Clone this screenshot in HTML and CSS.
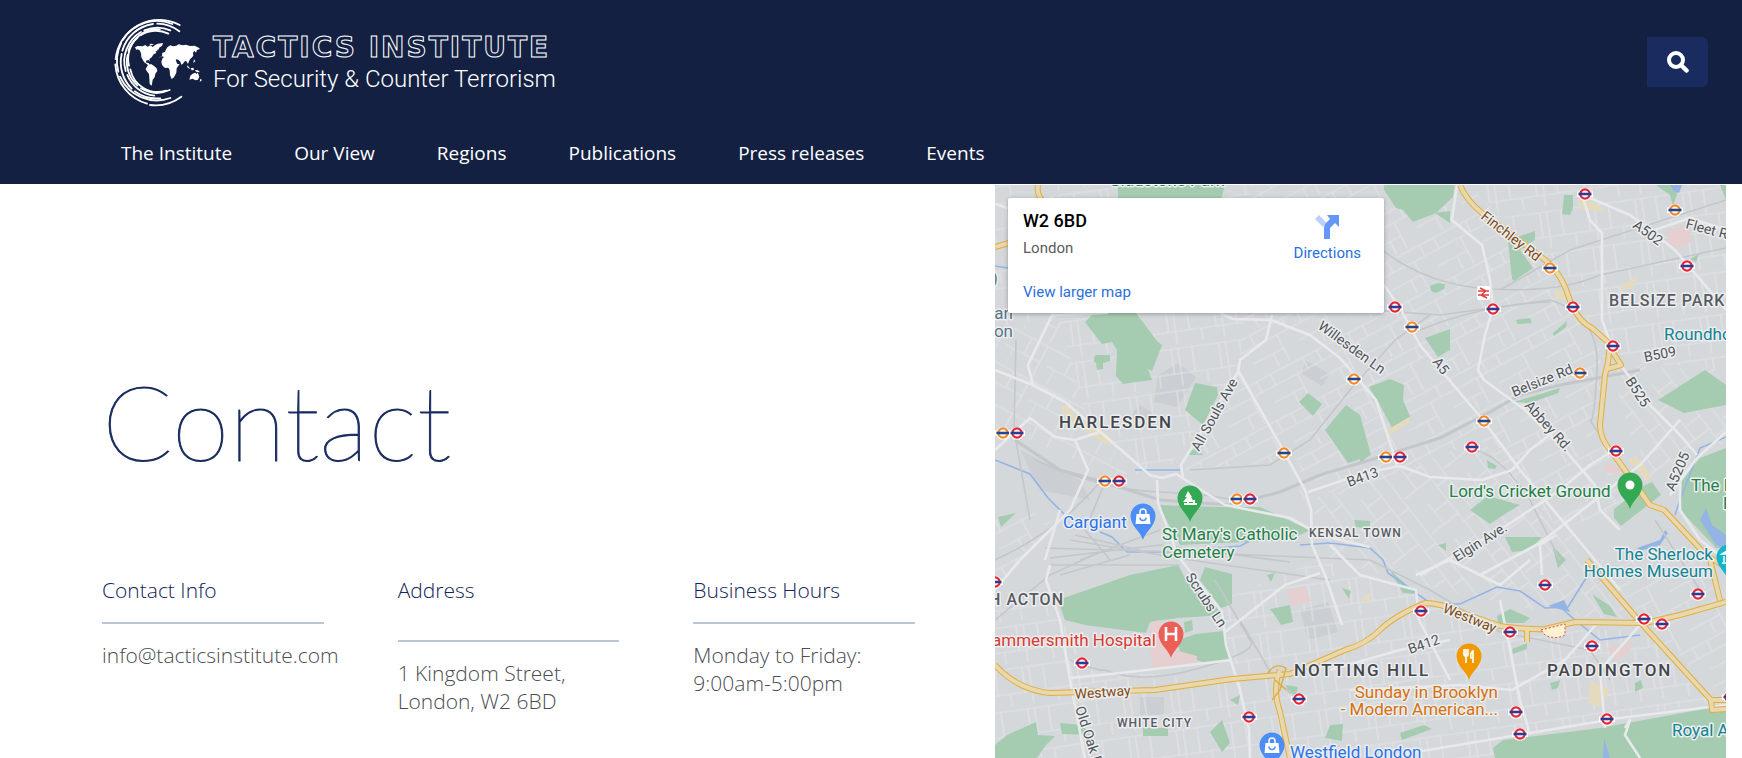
FILE: index.html
```html
<!DOCTYPE html>
<html lang="en">
<head>
<meta charset="utf-8">
<meta name="viewport" content="width=device-width, initial-scale=1">
<title>Contact - Tactics Institute</title>
<link rel="stylesheet" href="styles.css">
</head>
<body>
<header class="site-header">
  <div class="masthead">
    <a class="logo" href="#">
      <svg class="logo-mark" viewBox="66 48 280 276" aria-hidden="true">
        <g fill="none" stroke="#fff" stroke-width="5.5" stroke-linecap="round">
          <path d="M268 78A131 131 0 0 0 76 180"/>
          <path d="M75 196A131 131 0 0 0 170 314"/>
          <path d="M179 318A131 131 0 0 0 273 293"/>
          <path d="M246 75A121 121 0 0 0 98 122M92 133A121 121 0 0 0 84 218M89 233A121 121 0 0 0 240 297"/>
          <path d="M267 97A112 112 0 0 0 201 74M188 75A112 112 0 0 0 96 155M94 165A112 112 0 0 0 124 269M133 277A112 112 0 0 0 210 298"/>
          <path d="M240 94A102 102 0 0 0 162 94M152 99A102 102 0 0 0 106 216M111 228A102 102 0 0 0 192 290"/>
          <path d="M208 91A93 93 0 0 0 114 155M112 168A93 93 0 0 0 141 259M152 268A93 93 0 0 0 238 273"/>
          <path d="M234 104A84 84 0 0 0 151 109M142 116A84 84 0 0 0 116 200M120 211A84 84 0 0 0 227 275"/>
        </g>
        <g fill="#fff">
          <path d="M133 146l8-5 16 1 8-4 7 5 8-4 7 5 7-5 6 7 1 11-5-1 2 6-8 4-6 9-7 5 2 8-4-5-8 2 1 6 7 1 3 6 5 3-5 1-9-7-8-6-8-14-1-12-4-9-7-3-5 3 2-4z"/>
          <path d="M193 139l9-5 16-2-3 9-7 4-5 9-6-7zM176 136l8-2 7 3-8 2z"/>
          <path d="M173 198l9-3 9 6 8 7 2 8-6 8-2 11-6 7-2 14-2 4-5-5-1-18-1-12-7-9-3-6z"/>
          <path d="M217 177l9-6 14 1 5 4 10 2 3 10 3 7 7 0-9 13-1 13-7 14-7 5-5-12-1-15-4-7-10 1-9-9-2-10z"/>
          <path d="M215 170l1-9 8-2 2-6 5-8 9-6 8 3 10-2 7-4 12 3 10-2 12 4 14-1 12 6 4 4-9 3-3 8-5-6-4 7 1 8-5 6-4 3-4 8-3 8-5-8-4-1-7 9-4 2-3-9-6-6-8-1-5 12-9 6-8-18-6-2-3-3-9-4-7 1-3 4z"/>
          <path d="M244 222l6-3-2 12-5 3zM290 199l6 5 3 7-8-6zM301 208l8-2 2 7-7 1zM314 213l9 1 6 6-12-2zM300 230l7-6 8-3 4 4 3-5 5 13-4 9-8 2-8-5-10 3zM330 239l5 4-7 6zM311 181l4 5-6 7z"/>
        </g>
      </svg>
      <span class="logo-text">
        <span class="logo-name">TACTICS INSTITUTE</span>
        <span class="logo-tag">For Security &amp; Counter Terrorism</span>
      </span>
    </a>
    <button class="search" type="button" aria-label="Search">
      <svg viewBox="0 0 22 22" aria-hidden="true"><circle cx="9" cy="9" r="7" fill="none" stroke="#fff" stroke-width="4"/><path d="M14 14l5.500 5.500" stroke="#fff" stroke-width="4.500" stroke-linecap="round"/></svg>
    </button>
  </div>
  <nav class="menu">
    <a href="#">The Institute</a>
    <a href="#">Our View</a>
    <a href="#">Regions</a>
    <a href="#">Publications</a>
    <a href="#">Press releases</a>
    <a href="#">Events</a>
  </nav>
</header>
<main class="page">
  <section class="contact">
    <h1>Contact</h1>
    <div class="columns">
      <section class="col">
        <h2>Contact Info</h2>
        <hr>
        <p><a href="#">info@tacticsinstitute.com</a></p>
      </section>
      <section class="col col-address">
        <h2>Address</h2>
        <hr>
        <p>1 Kingdom Street,<br>London, W2 6BD</p>
      </section>
      <section class="col">
        <h2>Business Hours</h2>
        <hr>
        <p>Monday to Friday:<br>9:00am-5:00pm</p>
      </section>
    </div>
  </section>
  <section class="map" aria-label="Map">
    <svg class="map-canvas" viewBox="995 185 731 573" preserveAspectRatio="xMinYMin slice">
      <defs>
        <pattern id="s1" width="46" height="38" patternUnits="userSpaceOnUse" patternTransform="rotate(28)"><path d="M0 4H46M0 22H30M12 4V22M30 4V38M0 38V22M38 22H46" class="minor"/></pattern>
        <pattern id="s2" width="52" height="44" patternUnits="userSpaceOnUse" patternTransform="rotate(-28)"><path d="M0 3H52M0 15H52M0 30H34M10 3V15M34 15V44M22 30V44M46 3V15" class="minor"/></pattern>
        <pattern id="s3" width="48" height="42" patternUnits="userSpaceOnUse" patternTransform="rotate(-8)"><path d="M0 5H48M14 5V42M28 5V30M0 30H48M40 30V42M7 30V5" class="minor"/></pattern>
        <pattern id="s4" width="44" height="50" patternUnits="userSpaceOnUse" patternTransform="rotate(52)"><path d="M0 3H44M0 17H44M0 35H26M10 17V35M26 17V50M36 3V17" class="minor"/></pattern>
        <g id="tube-red"><path d="M-7-1.500H-5.500A6 6 0 0 1 5.500-1.500H7V2H5.500A6 6 0 0 1-5.500 2H-7Z" fill="#fff" stroke="#fff" stroke-width="2"/><circle r="4.700" fill="#fff" stroke="#e32636" stroke-width="2.200"/><path d="M-6.500 0H6.500" stroke="#2a3c94" stroke-width="2.600"/></g>
        <g id="tube-orange"><path d="M-7-1.500H-5.500A6 6 0 0 1 5.500-1.500H7V2H5.500A6 6 0 0 1-5.500 2H-7Z" fill="#fff" stroke="#fff" stroke-width="2"/><circle r="4.700" fill="#fff" stroke="#f28a2c" stroke-width="2.200"/><path d="M-6.500 0H6.500" stroke="#1f4595" stroke-width="2.600"/></g>
        <path id="pin" d="M0 24C-2 16-12.500 10-12.500 0A12.500 12.500 0 0 1 12.500 0C12.500 10 2 16 0 24Z"/>
        <g id="bag"><path d="M-6.500-2H6.500L7.500 8H-7.500Z" fill="#fff"/><path d="M-3-1V-4A3 3 0 0 1 3-4V-1" fill="none" stroke="#fff" stroke-width="1.500"/><path d="M-3 1.500A3 3 0 0 0 3 1.500" fill="none" stroke="#4c8df6" stroke-width="1.500"/></g>
      </defs>
      <rect x="995" y="185" width="731" height="573" fill="#d5d8db"/>
      <g fill="#cbcfd4"><path d="M1158 375l20-12 18 14-18 30-24-5zM1305 360l25 14-8 12-20-12zM1140 405l16 10-16 14-12-12zM1020 450l60 30 10 20-50-10zM1300 610l28-8 10 30-30 8zM1140 697h24v18h-24z"/></g>
      <path fill="url(#s3)" d="M995 185H1250L1240 370 1160 480 1090 430 1060 320 995 330z"/>
      <path fill="url(#s1)" d="M995 330L1060 320 1090 430 1160 480 1100 470 995 425z"/>
      <path fill="url(#s2)" d="M1250 185H1470L1540 260 1600 345 1430 310 1360 400 1300 460 1180 470 1240 370z"/>
      <path fill="url(#s3)" d="M1470 185H1726V370L1605 360 1560 270z"/>
      <path fill="url(#s2)" d="M1430 310L1600 345V430L1640 500 1560 530 1480 440 1380 480 1300 500 1300 460z"/>
      <path fill="url(#s4)" d="M1310 500L1400 470 1480 440 1580 540 1640 620 1560 615 1440 590 1330 560zM1610 365L1726 370V440L1680 490 1650 500z"/>
      <path fill="url(#s3)" d="M995 600L1050 600 1090 670 1235 680 1220 600 1320 560 1440 600 1500 630 1640 630 1720 700 1500 740V758H995z"/>
      <path fill="url(#s2)" d="M1600 560L1710 560 1726 600V700L1640 620zM995 520L1060 510 1015 570 995 580z"/>

      <g class="park">
        <path d="M1118 185H1225L1221 200H1118zM1384 185H1455L1453 197 1436 213 1413 222 1403 210 1396 208 1384 190zM1435 213L1450 211V223zM1508 240L1535 231V240L1520 250 1533 268 1514 281 1512 279zM1564 195H1573V208L1570 215 1562 214zM1656 185H1680L1673 206 1670 195zM1720 185H1726V200zM1690 259L1699 254 1696 262z"/>
        <path d="M1085 322L1094 313H1136L1157 341 1162 345 1152 371 1148 369 1152 380 1136 382 1123 384 1116 376 1117 350 1112 342 1102 344zM1094 357l6-2v9l-6-2zM1095 355h15v6l-7 2v6l-6 1z"/>
        <path d="M1430 286l8-3 7 1-1 5-8 4-5-2zM1516 320l14-2 2 5-15 1zM1553 333l14-12-1 6-12 9zM1425 338L1450 329V350L1438 357zM1514 402L1560 388 1558 393 1530 403z"/>
        <path d="M1185 410L1195 383 1217 387 1218 395 1203 425zM1188 452l7-3 9 6h-14zM1299 402L1308 393 1322 404 1313 416zM1325 430L1346 405 1360 415 1371 455 1348 463zM1369 387L1390 379 1404 385 1403 400 1411 418 1392 428 1380 405zM1658 400L1705 370 1726 385V405L1684 413zM1360 430l10 25-10 8zM1487 460l10 6-2 3-7-1z"/>
        <path d="M1158 505L1220 507 1260 507 1310 530 1290 540 1180 545zM998 517L1016 513 1001 527zM1354 520l16 1v8l-14-2z"/>
        <path d="M1470 510L1488 496 1520 505 1508 512 1490 524zM1614 509L1645 485 1652 482 1661 495 1621 526 1614 518zM1680 510L1682 480 1700 458 1726 448V548L1716 548zM1505 537H1542L1530 550 1512 552zM1552 545l14 15-8 8zM1438 545l8-2v8z"/>
        <path d="M1058 600L1130 575 1178 565 1185 578 1225 615 1178 618 1150 622 1146 633 1085 625 1065 620zM1205 567L1232 574V604L1221 608 1200 580zM1184 622l8-2 1 10-8 3zM1178 640L1196 634 1224 631 1231 658 1206 663 1180 655zM1270 609L1290 605 1293 622 1281 625 1276 617zM1342 588l9 3-2 8zM1267 575l8-2-4 9z"/>
        <path d="M1007 735L1036 722 1038 735 1055 736 1046 745 1037 758H995V745zM1060 723L1083 725 1090 735 1062 734zM1143 728h25v8h-25zM1210 732L1222 720 1230 743 1222 752zM1286 685l12 2-2 8-8-2zM1330 725l13-1-1 17-17-3zM1230 700l10-5-2 10z"/>
        <path d="M1497 616L1510 609 1530 618 1524 623 1498 623zM1592 594L1610 606 1617 617 1604 614zM1493 748L1503 740 1600 728 1726 705V758H1495zM1390 570l20 18 5 6-12-1zM1512 649l15-6v6l-14 5zM1550 683l10-3-2 8-6 2zM1635 683l6-3 2 8-8 4zM1400 733l24-8 8 4-30 11z"/>
      </g>
      <g fill="#e5cfd0"><path d="M1151 622L1160 620V642L1182 652 1197 656V663L1153 669 1149 645zM1287 590L1305 586 1311 601 1293 607zM1667 229l22-4 3 16-14 8-10-5zM1605 462l18 8-5 5-14-5zM1607 648l25-5-3 9-13 9z"/></g>
      <g fill="#e4dbbf"><path d="M1060 405l10 2 10 20 25 5 10 10-10 2-24-16-10-2zM1555 290l16 2 2 9-18-2zM1577 200l18 2 10 9-22-1zM1620 286l18-10-6 12-10 3zM1387 430l24-14-2 7-20 12zM1628 460l8-4 16 20-5 5zM1360 600l12-8-4 12zM1590 680l20 10-10 18-12-6z"/></g>

      <g class="water-line"><path d="M995 460L1030 474 1048 498 1065 515M1100 532L1112 537 1127 552 1170 552 1200 550 1240 546 1262 535M1135 470H1180M1300 545L1330 543 1370 548 1383 560 1388 573 1430 603 1460 604 1497 587 1520 591 1545 608 1568 607 1588 575M1560 607L1575 620 1600 640 1640 635M1726 437L1700 448 1680 500 1675 515M1008 268L995 266"/></g>
      <g fill="#94b4e6"><path d="M1700 520L1706 508 1712 525 1726 535V549L1716 545zM1637 548L1660 540 1665 530 1668 533 1660 545 1640 551zM1604 738L1610 758H1603zM1670 185h12l-3 8-5-2zM1548 606l16-6 6 12z"/></g>

      <g class="rail">
        <path d="M1015 440L1060 470 1100 481 1160 500 1230 505 1280 492 1320 475 1380 457 1440 438 1490 412 1520 395 1560 385 1640 370" stroke-width="3"/>
        <path d="M1370 240Q1420 285 1490 289T1600 275L1726 248M1370 310L1440 315 1550 300Q1600 315 1597 370T1590 420L1625 475M1420 330Q1480 305 1550 302M1500 290L1570 250 1726 200"/>
        <path d="M1190 470L1270 465 1310 440 1350 390 1395 340 1430 315M1016 340L1014 430 1030 520M1035 460Q1100 490 1160 492T1250 505M1100 482Q1060 530 995 560"/>
        <path d="M1045 548L1180 552 1370 560 1430 590 1500 632 1590 650 1610 680M1050 558L1160 545 1290 562M1070 540L1190 560 1330 580M1080 560L1160 530M1075 535L1140 550M1050 565H1180M1060 575L1130 555M1106 480L1085 530 1110 560" />
        <path d="M1105 670Q1140 685 1200 668T1250 640L1215 580M1070 660Q1100 672 1105 670M1240 620L1275 680 1300 700M995 620L1050 575 1100 552"/>
        <path d="M1475 450Q1500 455 1530 500L1560 560M1655 520L1700 590"/>
      </g>

      <g class="road">
        <path d="M995 204L1020 212 1053 198M1053 313L1028 365 1033 385M995 370L1033 385 1065 402 1098 430 1150 475 1162 478 1176 474 1225 505 1290 518 1320 535 1370 547M995 450L1030 418 1055 437 1075 440 1088 470 1070 510 1020 560 995 590M1075 440L1100 432"/>
        <path d="M1220 313L1233 319 1271 320 1310 335 1340 358 1376 400 1393 452 1397 467M1272 315L1266 340 1240 360 1238 372 1181 465 1183 477M1238 370L1283 450 1305 490 1311 510 1312 545 1325 575 1342 625"/>
        <path d="M1157 480L1158 503 1178 556 1222 612 1226 645 1240 690 1249 730 1250 758M1050 565L1046 580 1060 620 1070 680 1085 758M1060 510L1045 560M1225 632L1285 585 1320 573M1070 678L1120 673 1232 660M1108 313L1053 315"/>
        <path d="M1384 285L1400 308 1420 345 1445 375 1483 420 1520 470 1570 530 1620 590M1457 185L1452 220 1482 245 1490 280 1493 308 1485 335 1478 370 1484 380 1525 410 1565 450 1595 485 1600 510 1620 530M1582 195L1590 220 1602 233V320L1617 360 1650 405 1680 435 1697 455"/>
        <path d="M1583 195L1630 215 1675 250 1726 310M1640 235L1690 218 1726 230M1308 492L1350 478 1380 470 1400 466 1430 477 1482 480 1512 470 1530 450 1556 430M1420 575L1500 530 1560 490 1590 465 1614 450M1480 575L1540 543 1640 465 1680 420M1697 458L1680 480V510L1700 540 1726 560M1726 432L1697 458 1670 495M1556 535L1540 545 1542 575"/>
        <path d="M1330 545L1360 575 1416 590 1419 620 1450 680M1416 575L1450 560 1500 585 1530 560M1330 670L1400 650 1450 640M1380 758L1500 738 1620 718 1726 705M1500 600L1508 640 1520 700 1530 735M1512 690L1460 685 1350 690M1600 620L1565 660 1512 690M1640 625L1600 670 1605 728M1625 728L1630 720 1625 735 1640 758"/>
      </g>
      <g class="hwy-edge"><path d="M995 665Q1018 690 1050 693L1155 690 1232 679 1290 674 1345 650Q1366 644 1380 630T1425 603Q1440 603 1460 612L1500 626Q1530 630 1545 629L1575 622 1645 623 1680 615 1726 602"/><path d="M1038 185Q1036 195 1045 204M995 247L1009 243M1460 185Q1466 200 1482 213L1540 256Q1560 270 1568 295T1592 328L1610 344 1608 362 1605 375 1600 425Q1600 440 1612 452L1650 505 1664 510 1706 555 1726 567M1610 348L1621 365 1607 369M1527 630V642M1280 670Q1272 688 1280 712L1290 758M1587 560L1640 622 1711 700 1726 700M1710 560L1720 600M1711 700L1712 710 1726 709"/></g>
      <g class="hwy"><path d="M995 665Q1018 690 1050 693L1155 690 1232 679 1290 674 1345 650Q1366 644 1380 630T1425 603Q1440 603 1460 612L1500 626Q1530 630 1545 629L1575 622 1645 623 1680 615 1726 602"/><path d="M1038 185Q1036 195 1045 204M995 247L1009 243M1460 185Q1466 200 1482 213L1540 256Q1560 270 1568 295T1592 328L1610 344 1608 362 1605 375 1600 425Q1600 440 1612 452L1650 505 1664 510 1706 555 1726 567M1610 348L1621 365 1607 369M1527 630V642M1280 670Q1272 688 1280 712L1290 758M1587 560L1640 622 1711 700 1726 700M1710 560L1720 600M1711 700L1712 710 1726 709"/></g>
      <path class="hwy-knot" d="M1268 673Q1275 662 1286 668L1280 690 1272 700M1275 680L1286 690"/>
      <path d="M1541 630L1565 624V635Q1555 640 1545 635Z" fill="#fdf3d0" stroke="#ea4335" stroke-dasharray="2 2"/>

      <g>
        <use href="#tube-red" x="1585" y="194"/><use href="#tube-red" x="1687" y="266"/><use href="#tube-red" x="1395" y="307"/><use href="#tube-red" x="1493" y="309"/><use href="#tube-red" x="1573" y="307"/><use href="#tube-red" x="1613" y="346"/>
        <use href="#tube-orange" x="1675" y="210"/><use href="#tube-orange" x="1550" y="268"/><use href="#tube-orange" x="1412" y="327"/><use href="#tube-orange" x="1580" y="373"/><use href="#tube-orange" x="1354" y="379"/>
        <use href="#tube-orange" x="1003" y="433"/><use href="#tube-red" x="1017" y="433"/><use href="#tube-orange" x="1105" y="481"/><use href="#tube-red" x="1119" y="481"/><use href="#tube-orange" x="1284" y="453"/><use href="#tube-orange" x="1237" y="499"/><use href="#tube-red" x="1250" y="499"/>
        <use href="#tube-orange" x="1484" y="421"/><use href="#tube-red" x="1472" y="447"/><use href="#tube-orange" x="1386" y="457"/><use href="#tube-red" x="1400" y="457"/><use href="#tube-red" x="1616" y="451"/>
        <use href="#tube-red" x="995" y="582"/><use href="#tube-red" x="1082" y="663"/><use href="#tube-red" x="1299" y="699"/><use href="#tube-red" x="1249" y="717"/>
        <use href="#tube-red" x="1545" y="585"/><use href="#tube-red" x="1698" y="594"/><use href="#tube-red" x="1421" y="611"/><use href="#tube-red" x="1510" y="632"/><use href="#tube-red" x="1644" y="619"/><use href="#tube-red" x="1662" y="624"/><use href="#tube-red" x="1592" y="646"/><use href="#tube-red" x="1516" y="712"/><use href="#tube-red" x="1520" y="734"/><use href="#tube-red" x="1607" y="719"/><use href="#tube-red" x="1730" y="697"/>
        <rect x="1477" y="286" width="13" height="14" rx="2" fill="#fff"/><path d="M1478 291H1489M1478 295H1489M1480 288L1486 291 1481 295 1487 298" fill="none" stroke="#e0403f" stroke-width="1.400"/>
      </g>

      <g class="labels">
        <text class="poi green" x="1109" y="186">Gladstone Park</text>
        <text class="area" x="1059" y="428">HARLESDEN</text>
        <text class="area mid" x="1609" y="306">BELSIZE PARK</text>
        <text class="area small" x="1309" y="537">KENSAL TOWN</text>
        <text class="area mid" x="1064" y="605" text-anchor="end">NORTH ACTON</text>
        <text class="area" x="1294" y="676">NOTTING HILL</text>
        <text class="area" x="1547" y="676">PADDINGTON</text>
        <text class="area small" x="1117" y="727">WHITE CITY</text>
        <text class="poi slate" x="1013" y="319" text-anchor="end">Indian</text>
        <text class="poi slate" x="1013" y="337" text-anchor="end">Station</text>
        <text class="poi slate" x="998" y="284" text-anchor="end">)</text>
        <text class="poi teal" x="1664" y="340">Roundhouse</text>
        <text class="poi green" x="1449" y="497">Lord's Cricket Ground</text>
        <text class="poi green" x="1691" y="491">The Regent's</text>
        <text class="poi green" x="1723" y="509">Park</text>
        <text class="poi green" x="1162" y="540">St Mary's Catholic</text>
        <text class="poi green" x="1162" y="558">Cemetery</text>
        <text class="poi blue" x="1063" y="528">Cargiant</text>
        <text class="poi teal" x="1713" y="560" text-anchor="end">The Sherlock</text>
        <text class="poi teal" x="1713" y="577" text-anchor="end">Holmes Museum</text>
        <text class="poi red" x="1156" y="646" text-anchor="end">Hammersmith Hospital</text>
        <text class="poi orange" x="1498" y="698" text-anchor="end">Sunday in Brooklyn</text>
        <text class="poi orange" x="1498" y="715" text-anchor="end">- Modern American...</text>
        <text class="poi blue" x="1290" y="758">Westfield London</text>
        <text class="poi teal" x="1672" y="736">Royal Albert Hall</text>
        <text class="street brown" transform="translate(1480 218) rotate(38)">Finchley Rd</text>
        <text class="street brown" transform="translate(1075 699) rotate(-4)">Westway</text>
        <text class="street brown" transform="translate(1442 612) rotate(22)">Westway</text>
        <text class="street" transform="translate(1317 328) rotate(36)">Willesden Ln</text>
        <text class="street" transform="translate(1632 227) rotate(36)">A502</text>
        <text class="street" transform="translate(1685 228) rotate(15)">Fleet Rd</text>
        <text class="street" transform="translate(1432 362) rotate(52)">A5</text>
        <text class="street" transform="translate(1645 362) rotate(-11)">B509</text>
        <text class="street" transform="translate(1514 397) rotate(-22)">Belsize Rd</text>
        <text class="street" transform="translate(1625 381) rotate(57)">B525</text>
        <text class="street" transform="translate(1524 406) rotate(48)">Abbey Rd.</text>
        <text class="street" transform="translate(1199 452) rotate(-61)">All Souls Ave</text>
        <text class="street" transform="translate(1349 487) rotate(-20)">B413</text>
        <text class="street" transform="translate(1674 492) rotate(-67)">A5205</text>
        <text class="street" transform="translate(1457 562) rotate(-32)">Elgin Ave.</text>
        <text class="street" transform="translate(1185 577) rotate(56)">Scrubs Ln</text>
        <text class="street" transform="translate(1410 654) rotate(-19)">B412</text>
        <text class="street" transform="translate(1075 708) rotate(72)">Old Oak Rd</text>
      </g>

      <g transform="translate(1190 498)"><use href="#pin" fill="#34a853"/><path d="M-2-7L2-1H1L4 4H-1V5H3V2H5V5H7V7H-6V5H-3V4H-7L-3-1H-5Z" fill="#fff"/></g>
      <g transform="translate(1143 516)"><use href="#pin" fill="#4c8df6"/><use href="#bag"/></g>
      <g transform="translate(1630 485)"><use href="#pin" fill="#34a853"/><circle r="4.500" fill="#fff"/></g>
      <g transform="translate(1171 634)"><use href="#pin" fill="#ec5f57"/><path d="M-5-7V7M5-7V7M-5 0H5" stroke="#fff" stroke-width="2.600"/></g>
      <g transform="translate(1469 656)"><use href="#pin" fill="#f29900"/><path d="M-5-7V-2Q-5 0-3 0T-1-2V-7M-3-7V7M4 7V-5Q1-3 2 2H4" fill="none" stroke="#fff" stroke-width="1.700"/></g>
      <g transform="translate(1272 745)"><use href="#pin" fill="#4c8df6"/><use href="#bag"/></g>
      <g transform="translate(1729 557)"><use href="#pin" fill="#12b5cb"/><path d="M-7-3L0-7 7-3ZM-5-1V5M-7 6H7" fill="#fff" stroke="#fff" stroke-width="1.500"/></g>
    </svg>
    <div class="place-card">
      <div class="place">
        <strong>W2 6BD</strong>
        <span>London</span>
        <a href="#">View larger map</a>
      </div>
      <a class="directions" href="#">
        <svg viewBox="0 0 24 24" aria-hidden="true"><path d="M4 0L11.500 8 8 12 0 4Z" fill="#b8d0fb"/><path d="M9 24V13Q9 10 11 8L15 4 12 0H24V12L20 8 15 13V24Z" fill="#6497f8"/></svg>
        <span>Directions</span>
      </a>
    </div>
  </section>
</main>
</body>
</html>
```
FILE: styles.css
```css
* { box-sizing: border-box; }
body { margin: 0; background: #fff; font-family: "Open Sans", sans-serif; color: #4b4d52; }
a { color: inherit; text-decoration: none; }

.site-header { background: #132042; color: #fff; padding: 15px 34px 0 112px; height: 184px; }
.masthead { display: flex; justify-content: space-between; align-items: flex-start; }
.logo { display: flex; gap: 7px; align-items: flex-start; }
.logo-mark { width: 94px; height: 92px; }
.logo-text { display: flex; flex-direction: column; padding-top: 17px; white-space: nowrap; }
.logo-name { font: bold 28px/32px "DejaVu Sans", sans-serif; letter-spacing: 2px; color: transparent; -webkit-text-stroke: 1px #fff; }
.logo-tag { font: 300 24px/30px Roboto, sans-serif; }
.search { margin-top: 22px; width: 61px; height: 50px; border: 0; padding: 0; border-radius: 0 6px 6px 0; background: #1a2b5f; display: grid; place-items: center; }
.search svg { width: 22px; height: 22px; }
.menu { display: flex; gap: 62px; padding: 32px 0 0 9px; font: 19px/28px "Open Sans", sans-serif; white-space: nowrap; }

.page { display: grid; grid-template-columns: 995fr 731fr; min-height: calc(100vh - 185px); margin-top: 1px; padding-right: 16px; }
.contact { padding: 176px 0 40px 102px; }
h1 { margin: 0; font: 200 104px/120px Lato, sans-serif; color: #1a2b5f; -webkit-text-stroke: 1px #1a2b5f; }
.columns { display: grid; grid-template-columns: repeat(3, 1fr); column-gap: 74px; margin-top: 95px; padding-right: 80px; white-space: nowrap; }
.col { font-size: 21px; line-height: 28px; font-weight: 300; min-width: 0; }
h2 { margin: 0; font-size: 21px; line-height: 28px; font-weight: 300; color: #132459; }
hr { height: 2px; border: 0; margin: 18px 0 17px; background: #bcc5d5; }
.col p { margin: 0; }
.col-address hr { margin-top: 36px; }

.map { position: relative; overflow: hidden; background: #d5d8db; font-family: Roboto, sans-serif; }
.map-canvas { position: absolute; inset: 0; width: 100%; height: 100%; }
.minor { fill: none; stroke: #e1e3e5; stroke-width: 1.2; }
.road { fill: none; stroke: #e8e9eb; stroke-width: 2.6; stroke-linejoin: round; }
.rail { fill: none; stroke: #c3c7cb; stroke-width: 1.6; }
.park { fill: #a5ccb1; }
.water-line { fill: none; stroke: #94b4e6; stroke-width: 1.6; }
.hwy-edge { fill: none; stroke: #e2ad3f; stroke-width: 6; stroke-linejoin: round; }
.hwy { fill: none; stroke: #e8d8ae; stroke-width: 4; stroke-linejoin: round; }
.hwy-knot { fill: none; stroke: #e2ad3f; stroke-width: 1.4; }
.labels { stroke: #eceef0; stroke-width: 3; stroke-linejoin: round; }
.labels text { paint-order: stroke; }
.area { font-size: 17px; font-weight: 500; letter-spacing: 2px; fill: #44474b; }
.mid { font-size: 16px; letter-spacing: 1px; fill: #585b60; }
.small { font-size: 12px; letter-spacing: 1px; fill: #585b60; }
.poi { font-size: 17px; }
.street { font-size: 14px; fill: #505357; }
.green { fill: #238045; }
.blue { fill: #2a73e8; }
.teal { fill: #148390; }
.red { fill: #d93a30; }
.orange { fill: #d8700b; }
.slate { fill: #5a7684; }
.brown { fill: #7d4a12; }

.place-card { position: absolute; top: 13px; left: 13px; width: 376px; background: #fff; border-radius: 2px; box-shadow: 0 1px 4px rgba(0, 0, 0, .3); padding: 12px 23px 10px 15px; display: flex; justify-content: space-between; font-size: 15px; line-height: 22px; color: #5b5b5b; }
.place { display: flex; flex-direction: column; align-items: flex-start; }
.place strong { font-size: 18px; font-weight: 500; color: #000; }
.place span { margin-top: 5px; }
.place a { margin-top: 22px; color: #2a6fdb; }
.directions { display: flex; flex-direction: column; align-items: center; gap: 3px; padding-top: 5px; color: #2a6fdb; }
.directions svg { width: 24px; height: 24px; }
```
